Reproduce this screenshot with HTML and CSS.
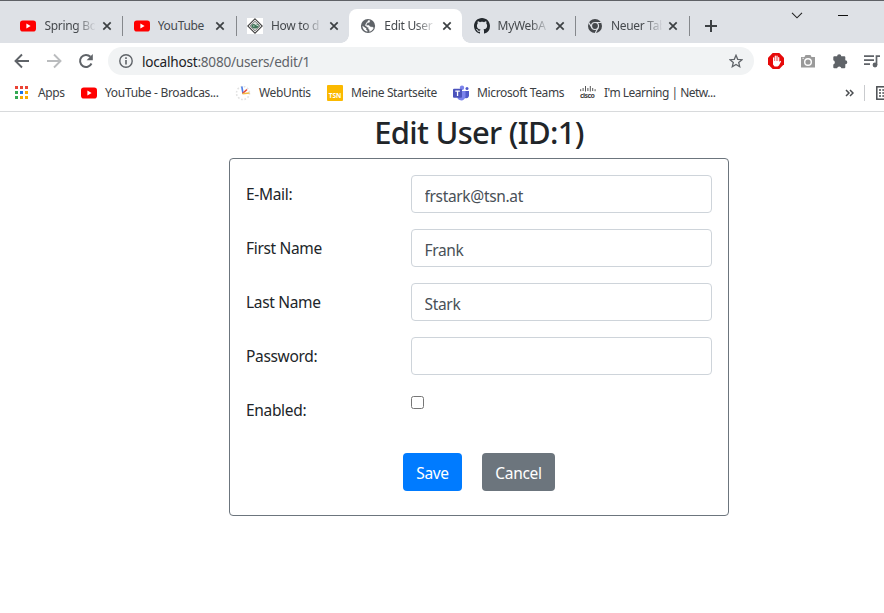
FILE: index.html
```html
<!DOCTYPE html>
<html lang="en">
<head>
<meta charset="utf-8">
<title>Edit User</title>
<link rel="stylesheet" href="styles.css">
</head>
<body>
<svg width="0" height="0" class="defs">
  <symbol id="yt" viewBox="0 0 16 16"><rect y="2.4" width="16" height="11.2" rx="2.8" fill="#f00"/><path d="M6.4 5.6v4.8L10.6 8z" fill="#fff"/></symbol>
  <symbol id="x" viewBox="0 0 10 10"><path d="M1.3 1.3l7.4 7.4M8.7 1.3L1.3 8.7" stroke="#3c4043" stroke-width="1.7"/></symbol>
</svg>
<header class="tabs">
  <div class="tab"><svg class="fav"><use href="#yt"/></svg><span class="name">Spring Bo</span><svg class="close"><use href="#x"/></svg></div>
  <div class="tab"><svg class="fav"><use href="#yt"/></svg><span class="name full">YouTube</span><svg class="close"><use href="#x"/></svg></div>
  <div class="tab plain"><svg class="fav" viewBox="0 0 16 16"><path fill="#fff" d="M0 0h16v16H0z"/><path d="M8 .8L15.200 8 8 15.200.8 8z" fill="#fff" stroke="#444" stroke-width="1.100"/><path d="M8 3.200L12.800 8 8 12.800 3.200 8z" fill="#dfe5e1" stroke="#555" stroke-width=".8"/><path d="M4.500 7Q7 5 8.500 7l3-1v3Q8 12 4.500 9z" fill="#3f7358"/><path d="M6 8h1.500m2-.500H11" fill="none" stroke="#c6ded0"/></svg><span class="name">How to d</span><svg class="close"><use href="#x"/></svg></div>
  <div class="tab active"><svg class="fav" viewBox="0 0 16 16"><circle cx="8" cy="8" r="7.100" fill="#5f6368"/><path d="M9.800 2.700L9.300 4.300 7.200 4.600 6.300 6.400 5.500 7.600H9L10.300 9l2.600.3.500.7Q12.500 12.600 9.700 13.400V11.800L8.500 11 9 9.800 7 8.800 5.500 7.200 6.600 4.800 8 3.500 8.200 2.600z" fill="#fff" stroke="#fff" stroke-width=".5"/><path d="M2.400 7.800l4 2.700-.2 1.200 1.200.8v1.200Q2.800 13 2.400 7.800" fill="#fff"/></svg><span class="name">Edit User</span><svg class="close"><use href="#x"/></svg></div>
  <div class="tab"><svg class="fav" viewBox="0 0 16 16"><path fill="#24292e" d="M8 0C3.580 0 0 3.580 0 8c0 3.540 2.290 6.530 5.470 7.590.4.070.55-.17.55-.38 0-.19-.01-.82-.01-1.490-2.010.37-2.530-.49-2.690-.94-.09-.23-.48-.94-.82-1.130-.28-.15-.68-.52-.01-.53.63-.01 1.080.58 1.230.82.72 1.210 1.870.87 2.330.66.07-.52.28-.87.51-1.070-1.780-.2-3.640-.89-3.640-3.950 0-.87.31-1.590.82-2.150-.08-.2-.36-1.020.08-2.120 0 0 .67-.21 2.200.82.64-.18 1.320-.27 2-.27s1.360.09 2 .27c1.530-1.040 2.200-.82 2.200-.82.44 1.100.16 1.920.08 2.120.51.56.82 1.270.82 2.150 0 3.070-1.870 3.750-3.650 3.950.29.25.54.73.54 1.480 0 1.070-.01 1.930-.01 2.200 0 .21.15.46.55.38A8 8 0 0 0 16 8c0-4.420-3.580-8-8-8z"/></svg><span class="name">MyWebA</span><svg class="close"><use href="#x"/></svg></div>
  <div class="tab"><svg class="fav" viewBox="0 0 16 16"><circle cx="8" cy="8" r="7" fill="#45484c"/><g fill="none" stroke="#dee1e6" stroke-width="1.200"><circle cx="8" cy="8" r="3.500"/><path d="M8 4.500h6M11 9.700L8.300 15M5 9.700L1.800 4.600"/></g></svg><span class="name">Neuer Tab</span><svg class="close"><use href="#x"/></svg></div>
  <svg class="plus" viewBox="0 0 12 12"><path d="M6 0v12M0 6h12" stroke="#3c4043" stroke-width="2"/></svg>
  <svg class="chev" viewBox="0 0 12 7"><path d="M1 .8L6 5.800 11 .8" fill="none" stroke="#222" stroke-width="1.100"/></svg>
  <div class="min"></div>
</header>
<nav class="toolbar">
  <svg class="back" viewBox="0 0 16 16"><path d="M15 8H2M8 1.500L1.500 8 8 14.500" fill="none" stroke="#5f6368" stroke-width="1.900"/></svg>
  <svg class="fwd" viewBox="0 0 16 16"><path d="M1 8h13M8 1.500L14.500 8 8 14.500" fill="none" stroke="#babcbe" stroke-width="1.900"/></svg>
  <svg class="reload" viewBox="0 0 16 16"><path d="M13.500 10.500A6 6 0 1 1 12.400 3.800" fill="none" stroke="#5f6368" stroke-width="2"/><path d="M14.800 1v6.200H8.600z" fill="#5f6368"/></svg>
  <div class="omni">
    <svg class="info" viewBox="0 0 14 14"><circle cx="7" cy="7" r="6.200" fill="none" stroke="#5f6368" stroke-width="1.400"/><path d="M7 6v4.500M7 3.300v1.600" stroke="#5f6368" stroke-width="1.600"/></svg>
    <span class="url"><b>localhost</b>:8080/users/edit/1</span>
    <svg class="star" viewBox="0 0 14 14"><path d="M7 1.300l1.700 4 4.300.4-3.300 2.800 1 4.200L7 10.500l-3.700 2.200 1-4.200L1 5.700l4.300-.4z" fill="none" stroke="#5f6368" stroke-width="1.300"/></svg>
  </div>
  <svg class="ext" viewBox="0 0 16 16"><path d="M4.700 0h6.600L16 4.700v6.600L11.300 16H4.700L0 11.300V4.700z" fill="#e60a0a"/><path d="M5.600 8.500V4.800M7.300 8V3.200M9 8V3.200M10.700 8.500V4.600" stroke="#fff" stroke-width="1.200" stroke-linecap="round"/><path d="M5 8h6.300v1l1-1.200.8.700-2.100 4L9.500 13.500h-3L5 11.500z" fill="#fff"/></svg>
  <svg class="ext" viewBox="0 0 16 16"><path d="M1 4h3.500l1-2h5l1 2H15v10.500H1z" fill="#9a9a9a"/><circle cx="8" cy="9" r="3.300" fill="none" stroke="#fff" stroke-width="1.400"/><path d="M2.500 5.300h1.300" stroke="#fff"/></svg>
  <svg class="ext" viewBox="0 0 16 16"><path d="M1.300 4.300q0-1 1-1h2.800a2.100 2.100 0 1 1 4.200 0h3q1 0 1 1v3a2 2 0 1 1 0 4v3q0 1-1 1H9.400a2.200 2.200 0 0 0-4.300 0H2.300q-1 0-1-1v-2.800a2.200 2.200 0 0 0 0-4.200z" fill="#5f6368"/></svg>
  <svg class="ext" viewBox="0 0 16 16"><path d="M0 3.200h10M0 7.200h10M0 11.200h6" stroke="#5f6368" stroke-width="1.700"/><path d="M12.500 12V3.200H16" fill="none" stroke="#5f6368" stroke-width="1.700"/><circle cx="11" cy="12" r="2.400" fill="#5f6368"/></svg>
</nav>
<nav class="marks">
  <svg class="apps" viewBox="0 0 13 13"><g stroke-width="3" stroke-dasharray="3 2"><path d="M0 1.500h13" stroke="#ea4335"/><path d="M0 6.500h3M0 11.500h3" stroke="#34a853"/><path d="M5 6.500h3" stroke="#1a73e8"/><path d="M10 6.500h3M5 11.500h8" stroke="#f9ab00"/></g></svg><span class="m1">Apps</span>
  <svg class="mk"><use href="#yt"/></svg><span class="m2">YouTube - Broadcas...</span>
  <svg class="mk" viewBox="0 0 16 16"><circle cx="8" cy="8" r="6.500" fill="none" stroke="#e2e2e2" stroke-width="1.600" stroke-dasharray="1.700 1.700"/><path d="M8 8.500L6.800 1.500" stroke="#4d7fe8" stroke-width="1.600"/><path d="M7.500 8.500l4.500-4" stroke="#e84b3b" stroke-width="1.600"/><path d="M7.500 8.800l7-.8" stroke="#f4b942" stroke-width="1.600"/></svg><span class="m3">WebUntis</span>
  <span class="tsn">TSN</span><span class="m4">Meine Startseite</span>
  <svg class="mk" viewBox="0 0 16 16"><circle cx="9" cy="2.800" r="2.200" fill="#7b83eb"/><circle cx="14" cy="3.500" r="1.500" fill="#5059c9"/><path d="M11 6h5v5q-1 3-4 2z" fill="#5059c9"/><path d="M4.500 6h8v6q-1.500 4-5 3.300T4.500 12z" fill="#7b83eb"/><rect y="3.800" width="9" height="9" rx="1" fill="#4b53bc"/><path d="M2.300 6.200h4.500M4.550 6v5" stroke="#fff" stroke-width="1.300"/></svg><span class="m5">Microsoft Teams</span>
  <span class="cisco"><svg viewBox="0 0 16 6"><path d="M.7 3.200v2M3.100 2v3M5.500 0v5.500M7.900 2v3M10.300 0v5.500M12.700 2v3M15.100 3.200v2" stroke="#555" stroke-width="1"/></svg><i>cisco</i></span><span class="m6">I'm Learning | Netw...</span>
  <svg class="more" viewBox="0 0 9 8"><path d="M1 1l3 3-3 3M5 1l3 3-3 3" fill="none" stroke="#4a4d51" stroke-width="1.500"/></svg>
  <div class="rule"></div>
  <svg class="list" viewBox="0 0 14 14"><rect x=".8" y=".8" width="14" height="12.400" fill="none" stroke="#4a4d51" stroke-width="1.500"/><path d="M3 4h12M3 7h12M3 10h12" stroke="#4a4d51" stroke-width="1.500" stroke-dasharray="2 1.300"/></svg>
</nav>
<main>
  <h1>Edit User (ID:1)</h1>
  <form class="card">
    <div class="row"><label for="a">E-Mail:</label><input id="a" type="text" value="frstark@tsn.at"></div>
    <div class="row"><label for="b">First Name</label><input id="b" type="text" value="Frank"></div>
    <div class="row"><label for="c">Last Name</label><input id="c" type="text" value="Stark"></div>
    <div class="row"><label for="d">Password:</label><input id="d" type="password"></div>
    <div class="row"><label for="e">Enabled:</label><input id="e" type="checkbox"></div>
    <div class="actions"><button type="button" class="save">Save</button><button type="button" class="cancel">Cancel</button></div>
  </form>
</main>
</body>
</html>
```
FILE: styles.css
```css
* { box-sizing: border-box; }
body { margin: 0; width: 884px; height: 613px; overflow: hidden; background: #fff; color: #212529; font: 15.5px "Noto Sans", "Open Sans", sans-serif; letter-spacing: -.33px; }
svg { display: block; flex: none; }
.defs { position: absolute; }
.tabs { height: 43px; background: #dee1e6; border-top: 1px solid #5f6166; padding: 8px 0 0 9px; display: flex; }
.tab { position: relative; flex: none; width: 113.3px; height: 34px; display: flex; align-items: center; padding-left: 11.4px; font-size: 12px; letter-spacing: -.3px; color: #45494d; }
.tab::after { content: ""; position: absolute; right: -1px; top: 7px; width: 1px; height: 20px; background: #85888c; }
.tab.plain::after { display: none; }
.fav { width: 16px; height: 16px; }
.name { width: 51px; margin-left: 8px; overflow: hidden; white-space: nowrap; position: relative; top: -1px; -webkit-mask-image: linear-gradient(90deg, #000 32px, transparent 52px); mask-image: linear-gradient(90deg, #000 32px, transparent 52px); }
.name.full { -webkit-mask-image: none; mask-image: none; }
.close { width: 10px; height: 10px; margin-left: 6.6px; }
.active { background: #fff; border-radius: 8px 8px 0 0; }
.active::before, .active::after { content: ""; position: absolute; top: auto; bottom: 0; width: 8px; height: 8px; }
.active::before { left: -8px; background: radial-gradient(circle at 0 0, transparent 7.5px, #fff 8px); }
.tab.active::after { top: auto; right: -8px; width: 8px; height: 8px; background: radial-gradient(circle at 100% 0, transparent 7.5px, #fff 8px); }
.plus { width: 12px; height: 12px; margin: 11px 0 0 16px; }
.chev { width: 12px; height: 7px; margin: 3px 0 0 74px; }
.min { width: 10px; height: 1px; margin: 6px 0 0 35px; background: #111; }
.toolbar { height: 36px; display: flex; align-items: center; padding-left: 14px; }
.back, .fwd, .reload { width: 16px; height: 16px; margin-right: 16px; }
.reload { margin-right: 14px; }
.omni { width: 646px; height: 28px; margin-right: 14px; border-radius: 14px; background: #f1f3f4; display: flex; align-items: center; padding: 0 11px; flex: none; }
.info { width: 14px; height: 14px; }
.url { margin-left: 9px; flex: 1; font-size: 13.6px; letter-spacing: -.23px; color: #5f6368; white-space: nowrap; }
.url b { font-weight: 400; color: #202124; }
.star { width: 14px; height: 14px; }
.ext { width: 16px; height: 16px; margin-right: 16px; }
.marks { height: 33px; border-bottom: 1px solid #d8dadc; display: flex; align-items: center; padding: 0 0 5px 15px; font-size: 12px; letter-spacing: -.36px; color: #3c4043; white-space: nowrap; overflow: hidden; }
.marks > * { flex: none; }
.marks > span { line-height: 16px; }
.apps { width: 13px; height: 13px; margin-right: 10px; }
.mk { width: 16px; height: 16px; margin-right: 8px; }
.m1 { width: 43px; }
.m2 { width: 130px; }
.m3 { width: 68px; }
.m4 { width: 102px; margin-left: 8px; }
.m5 { width: 103px; }
.m6 { width: 241px; margin-left: 8px; }
.marks .m2 { letter-spacing: -.32px; }
.marks .m6 { letter-spacing: -.5px; }
.marks .tsn { width: 16px; height: 16px; border-radius: 1px; background: #fbb900; color: #fff; font-size: 6.5px; font-weight: 700; line-height: 22px; letter-spacing: 0; text-align: center; }
.cisco { width: 16px; height: 14px; }
.cisco svg { width: 16px; height: 6px; }
.cisco i { display: block; font: 700 7px/7px "Noto Sans", sans-serif; letter-spacing: -.6px; color: #444; }
.more { width: 9px; height: 8px; }
.rule { width: 1px; height: 16px; margin: 0 11px 0 10px; background: #c9cbce; }
.list { width: 14px; height: 14px; }
main { width: 500px; margin-left: 229px; }
h1 { margin: 0; height: 46px; font-size: 31px; line-height: 41px; font-weight: 550; letter-spacing: -.7px; text-align: center; white-space: nowrap; }
.card { height: 358px; border: 1px solid #6c757d; border-radius: 4px; padding: 16px; }
.row { height: 38px; margin-bottom: 16px; display: flex; }
label { width: 165px; line-height: 39px; }
input { margin: 0; font: inherit; letter-spacing: inherit; color: #495057; }
input[type="text"], input[type="password"] { width: 301px; height: 38px; padding: 3px 12px 0 12.5px; border: 1px solid #ced4da; border-radius: 4px; background: #fff; }
input[type="checkbox"] { width: 13px; height: 13px; margin-top: 5px; }
.actions { display: flex; justify-content: center; gap: 20px; padding-top: 8px; }
button { height: 38px; padding: 1px 0 0; border: 0; border-radius: 4px; color: #fff; font: inherit; letter-spacing: inherit; }
.save { width: 59px; background: #007bff; }
.cancel { width: 73px; background: #6c757d; }
```
